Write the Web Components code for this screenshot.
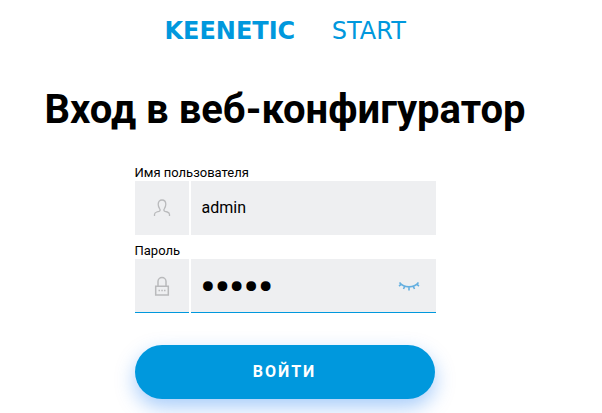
<!DOCTYPE html>
<html lang="ru">
<head>
<meta charset="utf-8">
<meta name="viewport" content="width=device-width, initial-scale=1">
<title>Keenetic Start</title>
<style>
  body { margin: 0; background: #fff; color: #000; font-family: Roboto, "Liberation Sans", sans-serif; overflow: hidden; }
</style>
</head>
<body>
<login-page>
  <brand-logo slot="logo"></brand-logo>
  <span slot="title">Вход в веб-конфигуратор</span>
</login-page>

<script>
class BaseElement extends HTMLElement {
  render(html) {
    this.attachShadow({ mode: "open" }).innerHTML = "<style>*{box-sizing:border-box}</style>" + html;
  }
}

customElements.define("brand-logo", class extends BaseElement {
  connectedCallback() {
    this.render(`
      <style>
        :host { display: grid; grid-template-columns: 3fr 2fr; gap: 16px; width: 262px; padding-left: 4px; color: #0098dd; font: 24px/30px "DejaVu Sans", sans-serif; text-align: center; white-space: nowrap; }
        b { font-weight: 700; }
        span { font-weight: 400; }
      </style>
      <b>KEENETIC</b><span>START</span>`);
  }
});

const icons = {
  user: `<svg width="20" height="20" viewBox="0 0 20 20" fill="none" stroke="#b9babc" stroke-width="1.3" aria-hidden="true">
    <path d="M2.5 18v-1.6c0-1.3.8-2 2.2-2.4l2.2-.6c1.3-.4 1.6-1.5.8-2.6C6.8 9.500 6.200 8 6.200 6.300 6.200 3.700 7.700 2 10 2s3.800 1.700 3.800 4.300c0 1.700-.6 3.200-1.500 4.500-.8 1.100-.5 2.200.8 2.600l2.200.6c1.400.4 2.200 1.100 2.200 2.400V18"/></svg>`,
  lock: `<svg width="20" height="22" viewBox="0 0 20 22" fill="none" stroke="#b9babc" aria-hidden="true">
    <path stroke-width="1.500" d="M3.700 11.200h12.600v8.900H3.700zM6 11.200V6.500a4 4 0 0 1 8 0v4.700"/>
    <path stroke-width="1.300" d="M6.500 15.500h1.500M9.300 15.500h1.500M12 15.500h1.500"/></svg>`,
  eye: `<svg width="22" height="12" viewBox="0 0 22 12" fill="none" stroke="#64afe0" stroke-width="1.600" aria-hidden="true">
    <path d="M1.500 2.500C6 8.300 16 8.300 20.500 2.500M3.500 4.200L1 6M6.800 6.200L5.500 9M11 7v3.500M15.200 6.200L16.500 9M18.500 4.200L21 6"/></svg>`
};

customElements.define("login-field", class extends BaseElement {
  connectedCallback() {
    const type = this.getAttribute("type");
    const secret = type === "password";
    this.render(`
      <style>
        :host { display: block; min-width: 0; }
        label { display: block; font-size: 13px; line-height: 16px; }
        .row { display: grid; grid-template-columns: 54px minmax(0, 1fr); gap: 2px; }
        .icon, .box { height: 54px; background: #eeeff1; border-bottom: 1px solid #eeeff1; display: flex; align-items: center; }
        .secret .icon, .secret .box { border-bottom: 1px solid #0098dd; }
        .icon { justify-content: center; }
        input { flex: 1; min-width: 0; height: 100%; border: 0; outline: 0; padding: 0 11px; background: none; color: #000; font: 16px/20px Roboto, "Liberation Sans", sans-serif; }
        input[type=password] { font-size: 39px; font-weight: 900; padding: 2px 10px 0; }
        button { border: 0; background: none; padding: 6px 5px 5px; margin-right: 11px; display: flex; cursor: pointer; }
      </style>
      <label for="value">${this.getAttribute("label")}</label>
      <div class="row ${secret ? "secret" : ""}">
        <div class="icon">${icons[this.getAttribute("icon")]}</div>
        <div class="box">
          <input id="value" type="${type}" value="${this.getAttribute("value")}">
          ${secret ? `<button type="button" aria-label="Показать пароль">${icons.eye}</button>` : ""}
        </div>
      </div>`);
    if (secret) {
      const input = this.shadowRoot.querySelector("input");
      this.shadowRoot.querySelector("button").onclick = () => {
        input.type = input.type === "password" ? "text" : "password";
      };
    }
  }
});

customElements.define("primary-button", class extends BaseElement {
  connectedCallback() {
    this.render(`
      <style>
        :host { display: block; }
        button { width: 100%; height: 54px; border: 0; border-radius: 27px; background: #0098dd; color: #fff; font: 700 16px/20px Roboto, "Liberation Sans", sans-serif; letter-spacing: 2px; box-shadow: 0 8px 20px rgba(0, 108, 240, .35); cursor: pointer; }
      </style>
      <button type="button"><slot></slot></button>`);
  }
});

customElements.define("login-page", class extends BaseElement {
  connectedCallback() {
    this.render(`
      <style>
        :host { display: block; padding: 16px 32px 14px 0; }
        main { display: flex; flex-direction: column; align-items: center; }
        h1 { margin: 39px 0 30px; font-size: 40px; line-height: 50px; font-weight: 700; text-align: center; }
        form { width: 301px; max-width: 100%; display: grid; grid-template-columns: minmax(0, 1fr); gap: 8px; }
        primary-button { margin: 24px 1px 0 0; }
      </style>
      <main>
        <slot name="logo"></slot>
        <h1><slot name="title"></slot></h1>
        <form>
          <login-field label="Имя пользователя" type="text" icon="user" value="admin"></login-field>
          <login-field label="Пароль" type="password" icon="lock" value="admin"></login-field>
          <primary-button>ВОЙТИ</primary-button>
        </form>
      </main>`);
  }
});
</script>
</body>
</html>
